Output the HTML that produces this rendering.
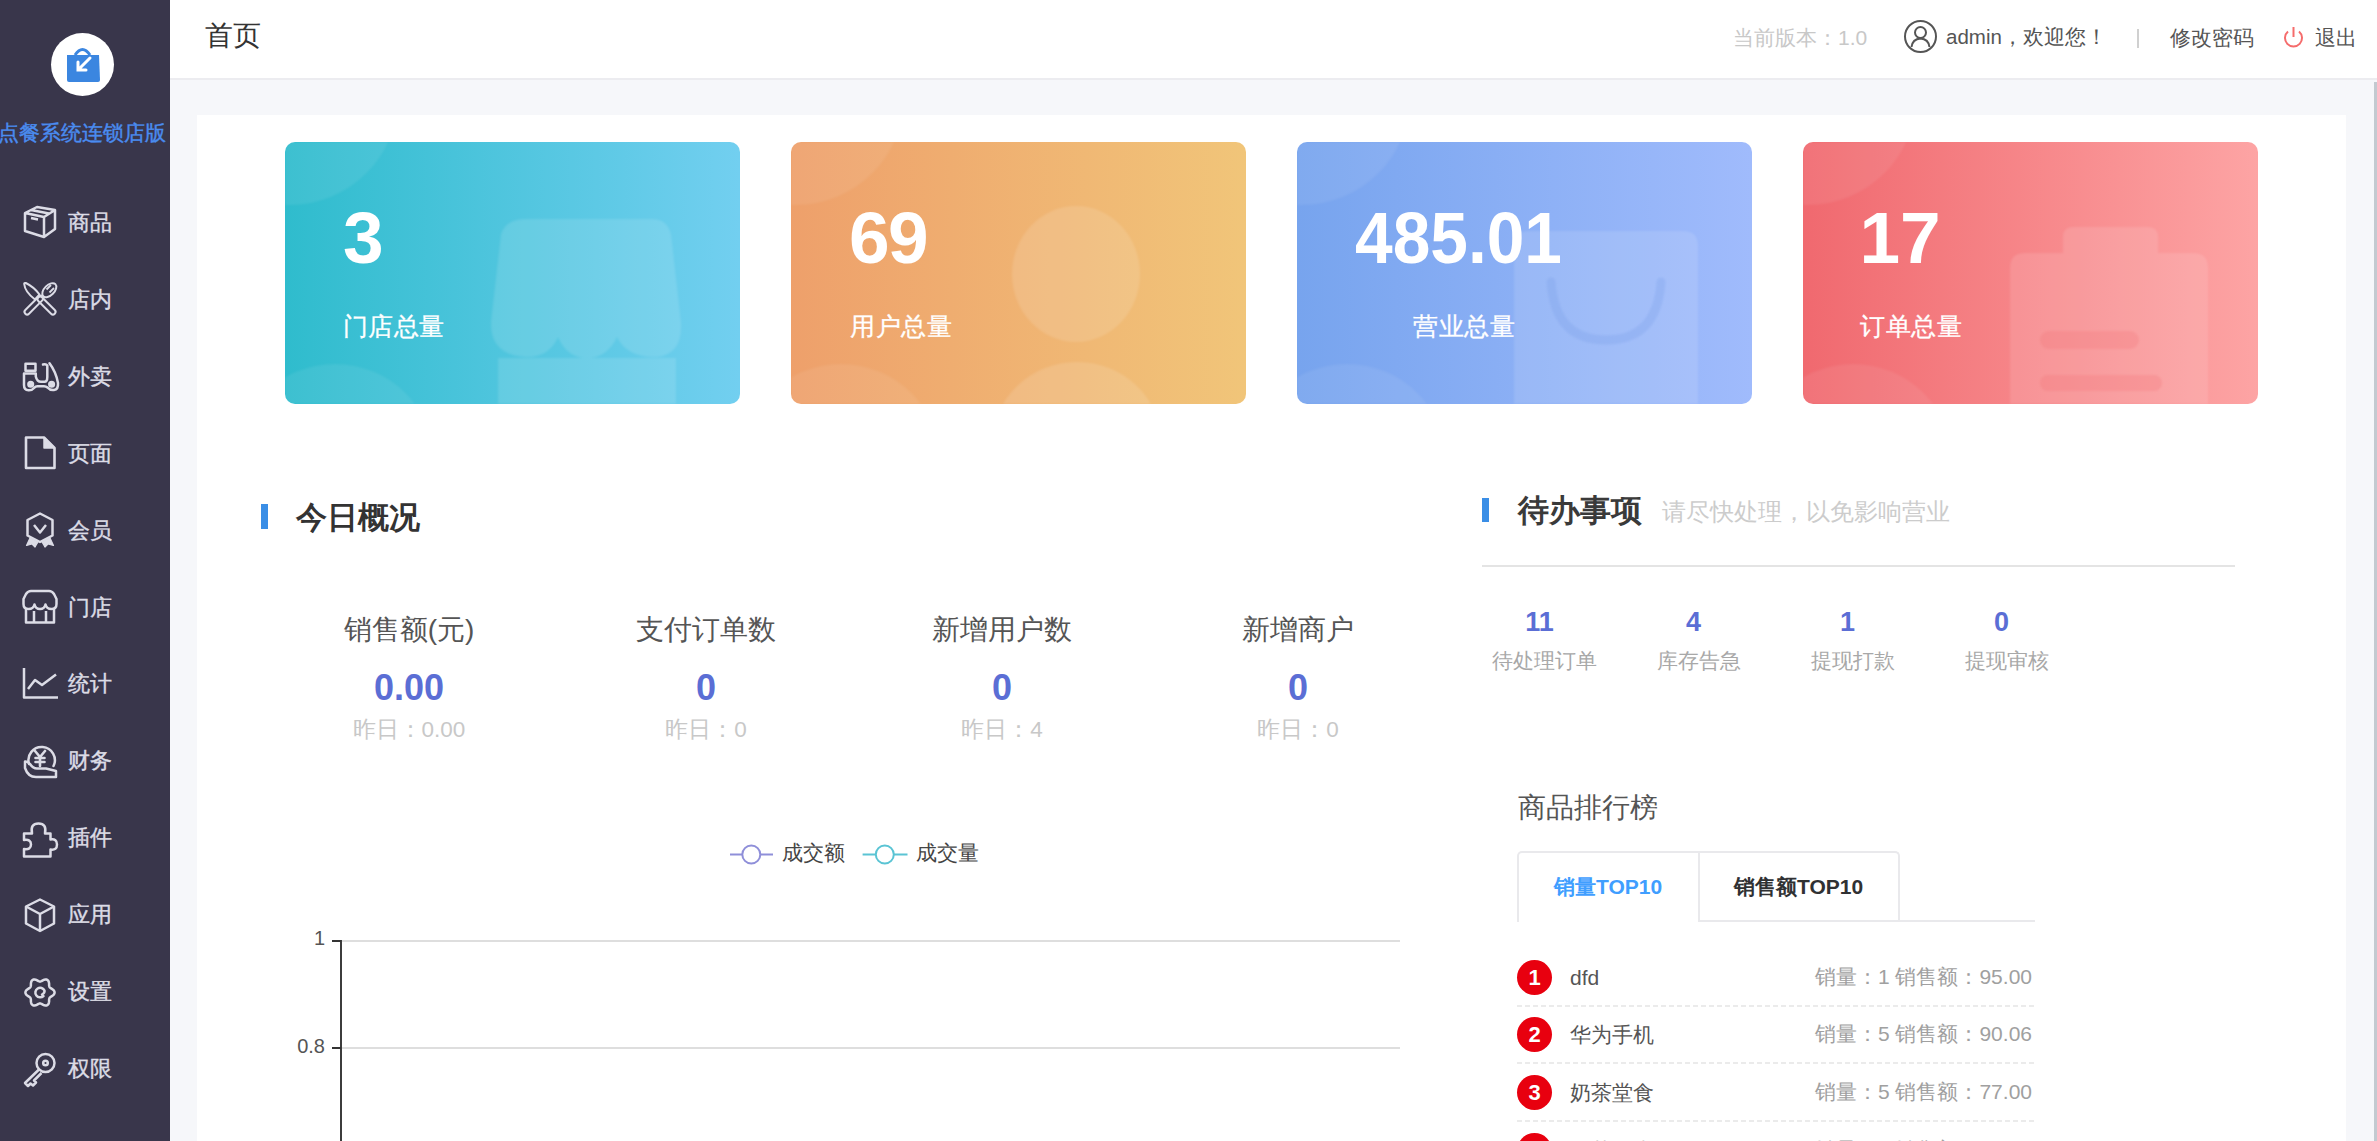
<!DOCTYPE html>
<html><head><meta charset="utf-8">
<style>
*{margin:0;padding:0;box-sizing:border-box}
html,body{width:2377px;height:1141px;overflow:hidden;background:#f6f7fa;font-family:"Liberation Sans",sans-serif}
.a{position:absolute;white-space:nowrap}
#side{position:absolute;left:0;top:0;width:170px;height:1141px;background:#39364b}
#hdr{position:absolute;left:170px;top:0;width:2207px;height:79.5px;background:#fff;border-bottom:2px solid #ececf0}
#panel{position:absolute;left:197px;top:115px;width:2149px;height:1100px;background:#fff}
#sb{position:absolute;left:2374px;top:82px;width:3px;height:1059px;background:#c3cad0}
.mi{position:absolute;left:0;width:170px;height:40px}
.mi svg{position:absolute;left:22px;width:36px;height:36px;overflow:visible}
.mi span{position:absolute;left:68px;top:9px;font-size:21.5px;line-height:22px;color:#dcdce6;-webkit-text-stroke:0.4px #dcdce6}
.card{position:absolute;top:142px;width:455px;height:262px;border-radius:10px;overflow:hidden}
.card svg{position:absolute;left:0;top:0;filter:blur(1.2px)}
.num{position:absolute;top:59px;font-size:73px;line-height:73px;font-weight:bold;color:#fff}
.lab{position:absolute;top:171px;font-size:25px;line-height:26px;color:#fff;-webkit-text-stroke:0.3px #fff;letter-spacing:0.6px}
.st{position:absolute;width:296px;text-align:center;white-space:nowrap}
.st .t{position:absolute;left:0;width:296px;top:0;font-size:28px;line-height:28px;color:#555}
.st .v{position:absolute;left:0;width:296px;top:54px;font-size:36px;line-height:36px;color:#5b6ed5;font-weight:bold}
.st .y{position:absolute;left:0;width:296px;top:103px;font-size:22.5px;line-height:22px;color:#c8c8c8}
.td{position:absolute;width:160px;text-align:center;white-space:nowrap}
.td .n{position:absolute;left:0;width:160px;top:0;font-size:27px;line-height:27px;font-weight:bold;color:#5b6ed5}
.td .l{position:absolute;left:0;width:160px;top:41px;font-size:21px;line-height:21px;color:#a8a8a8}
.row{position:absolute;left:1517px;width:518px;height:57px}
.bd{position:absolute;left:0;width:35px;height:35px;border-radius:50%;background:#e8000f;color:#fff;font-weight:bold;font-size:22px;line-height:35px;text-align:center}
.rn{position:absolute;left:53px;font-size:21px;line-height:21px;color:#555}
.rr{position:absolute;right:3px;font-size:21px;line-height:21px;color:#a0a0a0}
.dash{position:absolute;left:0;width:518px;height:2px;background:repeating-linear-gradient(90deg,#ebebeb 0 5px,transparent 5px 8px)}
</style></head><body>

<div id="side">
  <div class="a" style="left:51px;top:33px;width:63px;height:63px;border-radius:50%;background:#fff"></div>
  <svg class="a" style="left:60px;top:42px" width="46" height="46" viewBox="0 0 46 46">
    <path d="M15 13 Q22.5 2 30 13" fill="none" stroke="#3b86e0" stroke-width="3"/>
    <path d="M7 13 H39 L40 38 Q40 40 38 40 H9 Q7 40 7 38 Z" fill="#3b86e0"/>
    <path d="M30 16 L19 27 M18 20 V28 H26" fill="none" stroke="#fff" stroke-width="3" stroke-linecap="round"/>
  </svg>
  <div class="a" style="left:-2px;top:122px;font-size:21px;line-height:21px;color:#4a8cf0;-webkit-text-stroke:0.4px #4a8cf0">点餐系统连锁店版</div>
<div class="mi" style="top:202.00px"><svg viewBox="0 0 36 36" style="top:2px"><path d="M3 9 L15 3 L33 6 L33 25 L22 33 L3 27 Z M3 9 L22 13 L33 6 M22 13 L22 33 M9 6 L27 9.5 M9 14 L16 15.5" fill="none" stroke="#dcdce6" stroke-width="2.5" stroke-linejoin="round"/></svg><span style="top:9.85px">商品</span></div>
<div class="mi" style="top:279.09px"><svg viewBox="0 0 36 36" style="top:2px"><g fill="none" stroke="#dcdce6" stroke-width="2" stroke-linejoin="round"><rect x="-11.65" y="-2.6" width="23.3" height="5.2" rx="2.6" transform="translate(24.5 24.5) rotate(45)"/><rect x="-12" y="-2.6" width="24" height="5.2" rx="2.6" transform="translate(11.8 24.2) rotate(-45)"/><path d="M2.2 3 Q2 1.5 3.8 2 Q12 6 17.5 13.5 L13 18.5 Q3 11 2.2 3 Z"/><ellipse cx="0" cy="0" rx="5" ry="8.6" transform="translate(27.3 9.2) rotate(45)"/><path d="M24.5 8.5 L29 4 M27.5 11.5 L32 7" stroke-width="1.8"/></g></svg><span style="top:9.70px">店内</span></div>
<div class="mi" style="top:356.18px"><svg viewBox="0 0 36 36" style="top:2px"><g fill="none" stroke="#dcdce6" stroke-width="2.5" stroke-linejoin="round" stroke-linecap="round"><rect x="3.5" y="5.8" width="10" height="7"/><path d="M21 6.5 Q24 5.5 25.3 7.5 V19 Q25.3 23.8 22.5 23.8 H19 Q15 23.8 13.8 18.5 V15.5 H2 V27 Q2 32 6.5 32.3 Q10 32.5 12 30 Q13.5 28.2 15.5 28.2 H22 Q24 28.2 25.5 29.5 Q28 32.5 32 32 Q36.5 31.5 36 25 Q34 14 27.5 5.3"/><circle cx="8.7" cy="26.3" r="2.3" fill="#dcdce6"/><circle cx="29.6" cy="26.3" r="2.3" fill="#dcdce6"/></g></svg><span style="top:9.55px">外卖</span></div>
<div class="mi" style="top:433.27px"><svg viewBox="0 0 36 36" style="top:2px"><g stroke="#dcdce6" stroke-width="2.6" stroke-linejoin="round"><path d="M4 2.5 H22 L32.5 13 V33 H4 Z" fill="none"/><path d="M22 2.5 V13 H32.5 Z" fill="#dcdce6" stroke-width="1.5"/></g></svg><span style="top:9.40px">页面</span></div>
<div class="mi" style="top:510.36px"><svg viewBox="0 0 36 36" style="top:2px"><g fill="none" stroke="#dcdce6" stroke-width="2.5" stroke-linejoin="round"><path d="M18 1.5 L30.5 8 V23.5 L18 30 L5.5 23.5 V8 Z"/><path d="M12 13 L18 20.5 L24 13"/><path d="M8 26 L4.5 33.5 L10 32 L13 35 L16 30 Z M28 26 L31.5 33.5 L26 32 L23 35 L20 30 Z" fill="#dcdce6" stroke-width="1.2"/></g></svg><span style="top:9.25px">会员</span></div>
<div class="mi" style="top:587.45px"><svg viewBox="0 0 36 36" style="top:2px"><g fill="none" stroke="#dcdce6" stroke-width="2.5" stroke-linejoin="round"><path d="M9 2 H27 Q30 2 32 5 L34.5 10 V15 Q34.5 20 29.5 20 Q24.5 20 23.5 15.5 Q22.5 20 18 20 Q13.5 20 12.5 15.5 Q11.5 20 6.5 20 Q1.5 20 1.5 15 V10 L4 5 Q6 2 9 2 Z"/><path d="M4 19 V33.5 H32 V19 M12 33.5 V22 M24 33.5 V22"/></g></svg><span style="top:9.10px">门店</span></div>
<div class="mi" style="top:664.54px"><svg viewBox="0 0 36 36" style="top:2px"><g fill="none" stroke="#dcdce6" stroke-width="2.5" stroke-linejoin="round"><path d="M2 1 V30.5 H36"/><path d="M6 22 L13 13 L20 18 L34 7.5"/></g></svg><span style="top:8.95px">统计</span></div>
<div class="mi" style="top:741.63px"><svg viewBox="0 0 36 36" style="top:2px"><g fill="none" stroke="#dcdce6" stroke-width="2.5" stroke-linejoin="round" stroke-linecap="round"><path d="M7 20 A13.2 13.2 0 1 1 31.5 22"/><path d="M3 17.5 Q5.5 17 8 20 Q11 24.5 15 24.5 H24 L34 27 V33 H14 Q6 33 3 24 Z"/><path d="M13 7 L18 13 L23 7 M18 13 V22 M13.5 14 H22.5 M13.5 18 H22.5" stroke-width="2.6"/></g></svg><span style="top:8.80px">财务</span></div>
<div class="mi" style="top:818.72px"><svg viewBox="0 0 36 36" style="top:2px"><path d="M2 12.5 H10 Q8 2.5 16.5 2.5 Q25 2.5 23 12.5 H28.5 V18.5 Q35 17.5 35 23.5 Q35 29.5 28.5 28.5 V35.5 H2 V28 Q9 29 9 23.5 Q9 18 2 19 Z" fill="none" stroke="#dcdce6" stroke-width="2.5" stroke-linejoin="round"/></svg><span style="top:8.65px">插件</span></div>
<div class="mi" style="top:895.81px"><svg viewBox="0 0 36 36" style="top:2px"><g fill="none" stroke="#dcdce6" stroke-width="2.5" stroke-linejoin="round"><path d="M18 1.5 L32 8.5 V25.5 L18 33 L4 25.5 V8.5 Z"/><path d="M4 8.5 L18 16 L32 8.5 M18 16 V33"/></g></svg><span style="top:8.50px">应用</span></div>
<div class="mi" style="top:972.90px"><svg viewBox="0 0 36 36" style="top:2px"><g fill="none" stroke="#dcdce6" stroke-width="2.5" stroke-linejoin="round" stroke-linecap="round"><path d="M32.6 17.5 L32.4 18.4 L32.0 19.3 L31.2 20.1 L30.4 20.8 L29.5 21.4 L28.6 21.9 L28.0 22.4 L27.5 23.0 L27.3 23.7 L27.1 24.5 L27.1 25.5 L27.1 26.6 L26.9 27.6 L26.6 28.7 L26.0 29.5 L25.3 30.1 L24.4 30.5 L23.4 30.5 L22.3 30.3 L21.3 29.9 L20.4 29.4 L19.5 28.9 L18.7 28.6 L18.0 28.5 L17.3 28.6 L16.5 28.9 L15.6 29.4 L14.7 29.9 L13.7 30.3 L12.6 30.5 L11.6 30.5 L10.7 30.1 L10.0 29.5 L9.4 28.7 L9.1 27.6 L8.9 26.6 L8.9 25.5 L8.9 24.5 L8.7 23.7 L8.5 23.0 L8.0 22.4 L7.4 21.9 L6.5 21.4 L5.6 20.8 L4.8 20.1 L4.0 19.3 L3.6 18.4 L3.4 17.5 L3.6 16.6 L4.0 15.7 L4.8 14.9 L5.6 14.2 L6.5 13.6 L7.4 13.1 L8.0 12.6 L8.5 12.0 L8.7 11.3 L8.9 10.5 L8.9 9.5 L8.9 8.4 L9.1 7.4 L9.4 6.3 L10.0 5.5 L10.7 4.9 L11.6 4.5 L12.6 4.5 L13.7 4.7 L14.7 5.1 L15.6 5.6 L16.5 6.1 L17.3 6.4 L18.0 6.5 L18.7 6.4 L19.5 6.1 L20.4 5.6 L21.3 5.1 L22.3 4.7 L23.4 4.5 L24.4 4.5 L25.3 4.9 L26.0 5.5 L26.6 6.3 L26.9 7.4 L27.1 8.4 L27.1 9.5 L27.1 10.5 L27.3 11.3 L27.5 12.0 L28.0 12.6 L28.6 13.1 L29.5 13.6 L30.4 14.2 L31.2 14.9 L32.0 15.7 L32.4 16.6 L32.6 17.5Z"/><path d="M21.5 21 A4.8 4.8 0 1 1 22.5 15.5 Q23 18 20 19.5"/></g></svg><span style="top:8.35px">设置</span></div>
<div class="mi" style="top:1049.99px"><svg viewBox="0 0 36 36" style="top:2px"><g fill="none" stroke="#dcdce6" stroke-width="2.5" stroke-linejoin="round"><circle cx="23.5" cy="11" r="9"/><circle cx="23.5" cy="11" r="2.3"/><path d="M17 17.5 L3 31 L6 34 L8.5 31.5 L11 33.5 L14 30.5 L12 28.5 L19.5 21"/></g></svg><span style="top:8.20px">权限</span></div>
</div>

<div id="hdr">
  <div class="a" style="left:35px;top:22px;font-size:28px;line-height:28px;color:#333">首页</div>
  <div class="a" style="left:1563px;top:27px;font-size:21px;line-height:21px;color:#c8c8c8">当前版本：1.0</div>
  <svg class="a" style="left:1734px;top:20px" width="34" height="34" viewBox="0 0 34 34">
    <circle cx="16.5" cy="16.5" r="15.5" fill="none" stroke="#555" stroke-width="2"/>
    <circle cx="16.5" cy="12.5" r="5.5" fill="none" stroke="#555" stroke-width="2"/>
    <path d="M7.5 27 Q8.5 19 16.5 18.5 Q24.5 19 25.5 27" fill="none" stroke="#555" stroke-width="2"/>
  </svg>
  <div class="a" style="left:1776px;top:27px;font-size:20.5px;line-height:20px;color:#555">admin，欢迎您！</div>
  <div class="a" style="left:1967px;top:29px;width:2px;height:19px;background:#d0d0d0"></div>
  <div class="a" style="left:2000px;top:27px;font-size:20.6px;line-height:21px;color:#555">修改密码</div>
  <svg class="a" style="left:2112px;top:26px" width="24" height="22" viewBox="0 0 24 22">
    <path d="M6 5.5 A8.5 8.5 0 1 0 17 5.5" fill="none" stroke="#f56c6c" stroke-width="2"/>
    <path d="M11.5 1 V11" stroke="#f56c6c" stroke-width="2"/>
  </svg>
  <div class="a" style="left:2145px;top:27px;font-size:21px;line-height:21px;color:#555">退出</div>
</div>

<div id="panel"></div>
<div id="sb"></div>

<!-- cards -->
<div class="card" style="left:285px;background:linear-gradient(90deg,#2fbccd,#72cff0)">
  <svg width="455" height="262" viewBox="0 0 455 262"><g fill="#fff" fill-opacity=".12">
    <circle cx="5" cy="-45" r="108" fill-opacity=".07"/><circle cx="50" cy="322" r="100" fill-opacity=".07"/>
    <path d="M240 77 H367 Q382 77 386 92 L396 180 Q398 212 372 215 Q342 216 332 195 Q322 216 302 216 Q282 216 273 195 Q264 216 240 215 Q205 213 206 180 L216 92 Q221 77 240 77 Z"/><rect x="213" y="216" width="178" height="60"/>
  </g></svg>
  <div class="num a" style="left:58px">3</div>
  <div class="lab a" style="left:57.5px">门店总量</div>
</div>
<div class="card" style="left:791px;background:linear-gradient(90deg,#eea06b,#f1c579)">
  <svg width="455" height="262" viewBox="0 0 455 262"><g fill="#fff" fill-opacity=".12">
    <circle cx="5" cy="-45" r="108" fill-opacity=".07"/><circle cx="50" cy="322" r="100" fill-opacity=".07"/>
    <ellipse cx="285" cy="132" rx="64" ry="68"/>
    <ellipse cx="286" cy="300" rx="84" ry="80"/>
  </g></svg>
  <div class="num a" style="left:58px;letter-spacing:-1.5px">69</div>
  <div class="lab a" style="left:59px">用户总量</div>
</div>
<div class="card" style="left:1297px;background:linear-gradient(90deg,#77a4ee,#a0bbfc)">
  <svg width="455" height="262" viewBox="0 0 455 262"><g fill="#fff" fill-opacity=".12">
    <circle cx="5" cy="-45" r="108" fill-opacity=".07"/><circle cx="50" cy="322" r="100" fill-opacity=".07"/>
    <path d="M232 89 H386 Q401 89 401 104 V270 H217 V104 Q217 89 232 89 Z"/>
  </g>
  <path d="M254 140 Q258 198 309 198 Q360 198 364 140" fill="none" stroke="#7a9fe8" stroke-opacity=".3" stroke-width="9" stroke-linecap="round"/>
  </svg>
  <div class="num a" style="left:58px;transform:scaleX(0.927);transform-origin:0 0">485.01</div>
  <div class="lab a" style="left:116px;letter-spacing:0.5px">营业总量</div>
</div>
<div class="card" style="left:1803px;background:linear-gradient(90deg,#f0696f,#fda4a4)">
  <svg width="455" height="262" viewBox="0 0 455 262"><g fill="#fff" fill-opacity=".12">
    <circle cx="5" cy="-45" r="108" fill-opacity=".07"/><circle cx="50" cy="322" r="100" fill-opacity=".07"/>
    <path d="M222 111 H260 V95 Q260 85 270 85 H345 Q355 85 355 95 V111 H390 Q405 111 405 126 V270 H207 V126 Q207 111 222 111 Z"/>
  </g>
  <g fill="#f07075" fill-opacity=".25"><rect x="237" y="189" width="99" height="18" rx="9"/><rect x="237" y="233" width="122" height="16" rx="8"/></g>
  </svg>
  <div class="num a" style="left:56.5px">17</div>
  <div class="lab a" style="left:57px">订单总量</div>
</div>

<!-- today overview -->
<div class="a" style="left:261px;top:504px;width:7px;height:25px;background:#3a8ee6"></div>
<div class="a" style="left:296px;top:502px;font-size:31px;line-height:31px;font-weight:bold;color:#333">今日概况</div>

<div class="st" style="left:261px;top:616px"><div class="t">销售额(元)</div><div class="v">0.00</div><div class="y">昨日：0.00</div></div>
<div class="st" style="left:558px;top:616px"><div class="t">支付订单数</div><div class="v">0</div><div class="y">昨日：0</div></div>
<div class="st" style="left:854px;top:616px"><div class="t">新增用户数</div><div class="v">0</div><div class="y">昨日：4</div></div>
<div class="st" style="left:1150px;top:616px"><div class="t">新增商户</div><div class="v">0</div><div class="y">昨日：0</div></div>

<!-- chart legend -->
<svg class="a" style="left:725px;top:840px" width="190" height="30" viewBox="0 0 190 30">
  <path d="M5 14.5 H48" stroke="#8f8fd9" stroke-width="2"/><circle cx="26.3" cy="14.5" r="9" fill="#fff" stroke="#8f8fd9" stroke-width="2"/>
  <path d="M137.6 14.5 H182.5" stroke="#5ac4d4" stroke-width="2"/><circle cx="159.8" cy="14.5" r="9" fill="#fff" stroke="#5ac4d4" stroke-width="2"/>
</svg>
<div class="a" style="left:782px;top:842px;font-size:21px;line-height:21px;color:#444">成交额</div>
<div class="a" style="left:916px;top:842px;font-size:21px;line-height:21px;color:#444">成交量</div>

<!-- chart axes -->
<div class="a" style="left:342px;top:940px;width:1058px;height:2px;background:#dedede"></div>
<div class="a" style="left:342px;top:1047px;width:1058px;height:2px;background:#dedede"></div>
<div class="a" style="left:340px;top:940px;width:2px;height:210px;background:#3c3c3c"></div>
<div class="a" style="left:332px;top:940px;width:9px;height:2px;background:#333"></div>
<div class="a" style="left:332px;top:1047px;width:9px;height:2px;background:#333"></div>
<div class="a" style="left:290px;top:928px;width:35px;text-align:right;font-size:20px;line-height:20px;color:#555">1</div>
<div class="a" style="left:270px;top:1036px;width:55px;text-align:right;font-size:20px;line-height:20px;color:#555">0.8</div>

<!-- todo -->
<div class="a" style="left:1482px;top:498px;width:7px;height:24px;background:#3a8ee6"></div>
<div class="a" style="left:1518px;top:495px;font-size:31px;line-height:31px;font-weight:bold;color:#3a3a3a">待办事项</div>
<div class="a" style="left:1662px;top:500px;font-size:24px;line-height:24px;color:#cccccc">请尽快处理，以免影响营业</div>
<div class="a" style="left:1482px;top:565px;width:753px;height:2px;background:#e4e4e4"></div>

<div class="td" style="left:1459.5px;top:609px"><div class="n">11</div><div class="l" style="left:5px">待处理订单</div></div>
<div class="td" style="left:1613.5px;top:609px"><div class="n">4</div><div class="l" style="left:5px">库存告急</div></div>
<div class="td" style="left:1767.5px;top:609px"><div class="n">1</div><div class="l" style="left:5px">提现打款</div></div>
<div class="td" style="left:1921.5px;top:609px"><div class="n">0</div><div class="l" style="left:5px">提现审核</div></div>

<div class="a" style="left:1518px;top:794px;font-size:28px;line-height:28px;color:#555">商品排行榜</div>

<!-- tabs -->
<div class="a" style="left:1517px;top:851px;width:383px;height:71px;border:2px solid #e9e9ec;border-bottom:none;border-radius:5px 5px 0 0"></div>
<div class="a" style="left:1698px;top:852px;width:2px;height:70px;background:#e9e9ec"></div>
<div class="a" style="left:1698px;top:920px;width:337px;height:2px;background:#e9e9ec"></div>
<div class="a" style="left:1554px;top:876px;font-size:21px;line-height:21px;font-weight:bold;color:#409eff">销量TOP10</div>
<div class="a" style="left:1734px;top:876px;font-size:21px;line-height:21px;font-weight:bold;color:#303133">销售额TOP10</div>

<div class="row" style="top:949px"><div class="bd" style="top:11px">1</div><div class="rn" style="top:18px">dfd</div><div class="rr" style="top:17px">销量：1 销售额：95.00</div><div class="dash" style="top:56px"></div></div>
<div class="row" style="top:1006px"><div class="bd" style="top:11px">2</div><div class="rn" style="top:18px">华为手机</div><div class="rr" style="top:17px">销量：5 销售额：90.06</div><div class="dash" style="top:56px"></div></div>
<div class="row" style="top:1064px"><div class="bd" style="top:11px">3</div><div class="rn" style="top:18px">奶茶堂食</div><div class="rr" style="top:17px">销量：5 销售额：77.00</div><div class="dash" style="top:56px"></div></div>
<div class="row" style="top:1122px"><div class="bd" style="top:11px">4</div><div class="rn" style="top:18px">奶茶外卖</div><div class="rr" style="top:17px">销量：4 销售额：60.00</div></div>

</body></html>
